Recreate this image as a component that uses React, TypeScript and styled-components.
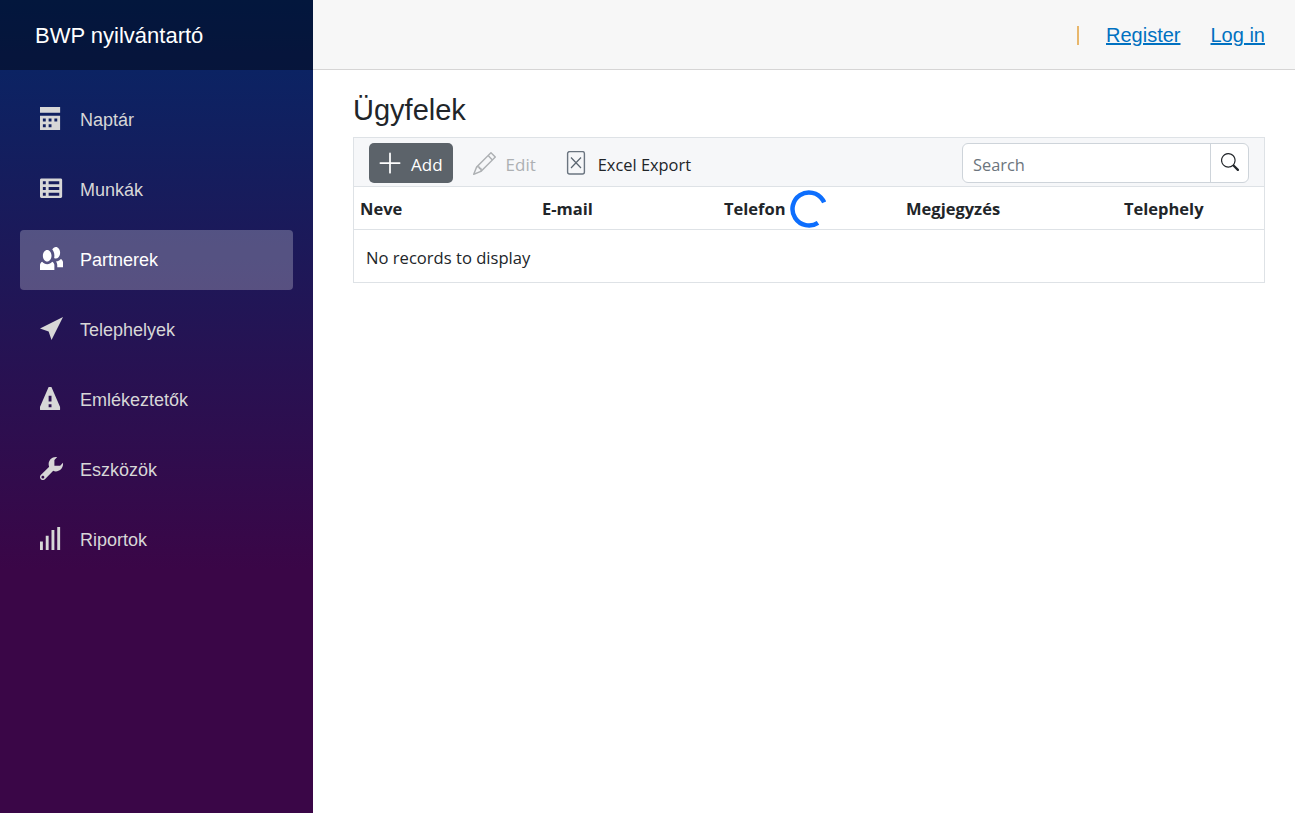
import React from "react";
import styled, { createGlobalStyle } from "styled-components";
import { BsPlusLg, BsPencil, BsSearch } from "react-icons/bs";

const GlobalStyle = createGlobalStyle`
  html, body {
    margin: 0;
    height: 100%;
    background: #fff;
  }
  #root {
    height: 100%;
  }
`;

const Page = styled.div`
  display: flex;
  height: 813px;
  overflow: hidden;
  font-family: "Liberation Sans", Arial, sans-serif;
`;

const Sidebar = styled.aside`
  width: 313px;
  flex-shrink: 0;
  display: flex;
  flex-direction: column;
  background-image: linear-gradient(180deg, #052767 0%, #3a0647 70%);
`;

const Brand = styled.div`
  height: 70px;
  box-sizing: border-box;
  display: flex;
  align-items: center;
  padding: 1px 0 0 35px;
  background: rgba(0, 0, 0, 0.4);
  color: #fff;
  font-size: 22px;
`;

const Nav = styled.nav`
  display: flex;
  flex-direction: column;
  padding: 20px 20px 0;
`;

const NavItem = styled.a<{ $active?: boolean }>`
  height: 60px;
  margin-bottom: 10px;
  display: flex;
  align-items: center;
  padding-left: 20px;
  border-radius: 4px;
  font-size: 18px;
  color: ${(p) => (p.$active ? "#fff" : "#d7d7d7")};
  background: ${(p) => (p.$active ? "rgba(255, 255, 255, 0.25)" : "transparent")};
`;

const NavIcon = styled.svg`
  width: 23px;
  height: 23px;
  margin: 0 17px 4px 0;
  fill: currentColor;
  flex-shrink: 0;
`;

const Main = styled.main`
  flex: 1;
  display: flex;
  flex-direction: column;
  min-width: 0;
`;

const TopRow = styled.header`
  height: 70px;
  box-sizing: border-box;
  display: flex;
  align-items: center;
  justify-content: flex-end;
  padding: 2px 30px 0 0;
  background: #f7f7f7;
  border-bottom: 1px solid #d6d5d5;
`;

const Divider = styled.span`
  width: 2px;
  height: 19px;
  background: #e8b76c;
  margin-right: 27px;
`;

const TopLink = styled.a`
  font-size: 20px;
  color: #0071c1;
  text-decoration: underline;
  margin-left: 30px;
  &:first-of-type {
    margin-left: 0;
  }
`;

const Content = styled.div`
  padding: 22px 30px 0 40px;
  font-family: "Open Sans", sans-serif;
  color: #212529;
`;

const Heading = styled.h1`
  margin: 0 0 9px;
  font-family: "Liberation Sans", Arial, sans-serif;
  font-size: 29px;
  line-height: 36px;
  font-weight: 400;
`;

const Grid = styled.div`
  border: 1px solid #dee2e6;
`;

const Toolbar = styled.div`
  height: 49px;
  box-sizing: border-box;
  display: flex;
  align-items: flex-start;
  padding: 5px 15px 0;
  background: #f6f7f9;
  border-bottom: 1px solid #dee2e6;
`;

const ToolButton = styled.button<{ $variant?: "primary" | "disabled" }>`
  height: 40px;
  display: flex;
  align-items: center;
  gap: 10px;
  padding: ${(p) => (p.$variant === "disabled" ? "0 8px 0 10px" : "0 10px")};
  margin-right: 10px;
  border: 0;
  border-radius: 5px;
  font-family: inherit;
  font-size: ${(p) => (p.$variant ? "17px" : "16.4px")};
  background: ${(p) => (p.$variant === "primary" ? "#5c636a" : "transparent")};
  color: ${(p) =>
    p.$variant === "primary" ? "#fff" : p.$variant === "disabled" ? "#adb0b3" : "#212529"};
`;

const ToolLabel = styled.span`
  padding-top: 2px;
`;

const PlusIcon = styled(BsPlusLg)`
  margin: 0 -3px;
`;

const ExportIcon = styled.svg`
  width: 24px;
  height: 24px;
  fill: none;
  stroke: #6b7580;
  stroke-width: 1.4;
`;

const SearchBox = styled.div`
  margin-left: auto;
  width: 287px;
  height: 40px;
  box-sizing: border-box;
  display: flex;
  border: 1px solid #ced4da;
  border-radius: 6px;
  background: #fff;
`;

const SearchInput = styled.div`
  flex: 1;
  display: flex;
  align-items: center;
  padding: 2px 0 0 10px;
  font-size: 16.4px;
  color: #6c757d;
  border-right: 1px solid #ced4da;
`;

const SearchButton = styled.div`
  width: 37px;
  display: flex;
  align-items: center;
  justify-content: center;
  padding-bottom: 3px;
  font-size: 18px;
  color: #212529;
`;

const HeaderRow = styled.div`
  position: relative;
  height: 43px;
  box-sizing: border-box;
  display: grid;
  grid-template-columns: 182px 182px 182px 218px 1fr;
  align-items: center;
  padding-left: 6px;
  border-bottom: 1px solid #dee2e6;
  font-size: 16.5px;
  font-weight: 700;
`;

const Spinner = styled.svg`
  position: absolute;
  left: 436px;
  top: 3px;
  width: 38px;
  height: 38px;
`;

const EmptyRow = styled.div`
  height: 52px;
  box-sizing: border-box;
  display: flex;
  align-items: center;
  padding: 2px 0 0 12px;
  font-size: 16.6px;
`;

const navItems = [
  {
    label: "Naptár",
    d: "M0 0v2h7v-2h-7zm0 3v4.91c0 .05.04.09.09.09h6.81c.05 0 .09-.04.09-.09v-4.91h-7zm1 1h1v1h-1v-1zm2 0h1v1h-1v-1zm2 0h1v1h-1v-1zm-4 2h1v1h-1v-1zm2 0h1v1h-1v-1z",
  },
  {
    label: "Munkák",
    d: "M.5.5c-.28 0-.5.22-.5.5v5.8c0 .28.22.5.5.5h6.7c.28 0 .5-.22.5-.5v-5.8c0-.28-.22-.5-.5-.5h-6.7zm.5 1h1v1h-1v-1zm2 0h3.7v1h-3.7v-1zm-2 2h1v1h-1v-1zm2 0h3.7v1h-3.7v-1zm-2 2h1v1h-1v-1zm2 0h3.7v1h-3.7v-1z",
  },
  {
    label: "Partnerek",
    active: true,
    d: "M5.5 0c-.51 0-.95.35-1.22.88.45.54.72 1.28.72 2.13 0 .29-.03.55-.09.81.19.11.38.19.59.19.83 0 1.5-.9 1.5-2s-.67-2-1.5-2zm-3 1c-.83 0-1.5.9-1.5 2s.67 2 1.5 2 1.5-.9 1.5-2-.67-2-1.5-2zm4.75 3.16c-.43.51-1.02.82-1.69.84.27.38.44.84.44 1.34v.66h2v-1.66c0-.52-.31-.97-.75-1.19zm-6.5 1c-.44.22-.75.67-.75 1.19v1.66h5v-1.66c0-.52-.31-.97-.75-1.19-.45.53-1.06.84-1.75.84s-1.3-.32-1.75-.84z",
  },
  { label: "Telephelyek", d: "M8 0l-8 4 3 1 1 3 4-8z" },
  {
    label: "Emlékeztetők",
    d: "M3.09 0c-.06 0-.1.04-.13.09l-2.94 6.81c-.02.05-.03.13-.03.19v.81c0 .05.04.09.09.09h6.81c.05 0 .09-.04.09-.09v-.81c0-.05-.01-.14-.03-.19l-2.94-6.81c-.02-.05-.07-.09-.13-.09h-.81zm-.09 3h1v2h-1v-2zm0 3h1v1h-1v-1z",
  },
  {
    label: "Eszközök",
    d: "M5.5 0c-1.38 0-2.5 1.12-2.5 2.5 0 .32.08.62.19.91l-2.91 2.88c-.39.39-.39 1.05 0 1.44.2.2.46.28.72.28.26 0 .52-.09.72-.28l2.88-2.91c.28.11.58.19.91.19 1.38 0 2.5-1.12 2.5-2.5 0-.16 0-.32-.03-.47l-.97.97h-2v-2l.97-.97c-.15-.03-.31-.03-.47-.03zm-4.5 6.5c.28 0 .5.22.5.5s-.22.5-.5.5-.5-.22-.5-.5.22-.5.5-.5z",
  },
  {
    label: "Riportok",
    d: "M6 0v8h1v-8h-1zm-2 1v7h1v-7h-1zm-2 2v5h1v-5h-1zm-2 2v3h1v-3h-1z",
  },
];

const columns = ["Neve", "E-mail", "Telefon", "Megjegyzés", "Telephely"];

const App: React.FC = () => (
  <Page>
    <GlobalStyle />
    <Sidebar>
      <Brand>BWP nyilvántartó</Brand>
      <Nav>
        {navItems.map((item) => (
          <NavItem key={item.label} $active={item.active}>
            <NavIcon viewBox="0 0 8 8">
              <path d={item.d} />
            </NavIcon>
            {item.label}
          </NavItem>
        ))}
      </Nav>
    </Sidebar>
    <Main>
      <TopRow>
        <Divider />
        <TopLink>Register</TopLink>
        <TopLink>Log in</TopLink>
      </TopRow>
      <Content>
        <Heading>Ügyfelek</Heading>
        <Grid>
          <Toolbar>
            <ToolButton $variant="primary">
              <PlusIcon size={28} />
              <ToolLabel>Add</ToolLabel>
            </ToolButton>
            <ToolButton $variant="disabled">
              <BsPencil size={23} />
              <ToolLabel>Edit</ToolLabel>
            </ToolButton>
            <ToolButton>
              <ExportIcon viewBox="0 0 24 24">
                <rect x="3.6" y="0.6" width="16.8" height="22.4" rx="2" />
                <path d="M7 6.5l10 10.5M17 6.5l-10 10.5" strokeWidth="1.2" stroke="#5a6570" />
              </ExportIcon>
              <ToolLabel>Excel Export</ToolLabel>
            </ToolButton>
            <SearchBox>
              <SearchInput>Search</SearchInput>
              <SearchButton>
                <BsSearch />
              </SearchButton>
            </SearchBox>
          </Toolbar>
          <HeaderRow>
            {columns.map((c) => (
              <span key={c}>{c}</span>
            ))}
            <Spinner viewBox="0 0 38 38">
              <circle
                cx="19"
                cy="19"
                r="16.5"
                fill="none"
                stroke="#0d6efd"
                strokeWidth="4.5"
                strokeDasharray="80 23.7"
                transform="rotate(57 19 19)"
              />
            </Spinner>
          </HeaderRow>
          <EmptyRow>No records to display</EmptyRow>
        </Grid>
      </Content>
    </Main>
  </Page>
);

export default App;
